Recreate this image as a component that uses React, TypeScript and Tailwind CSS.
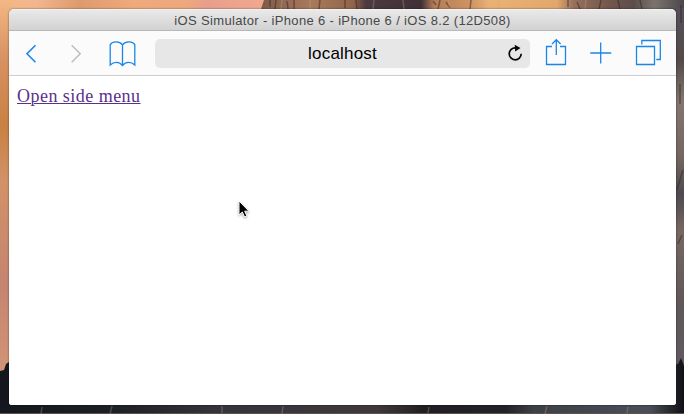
function Wallpaper() {
  return (
    <svg className="absolute inset-0" width="684" height="414" viewBox="0 0 684 414" preserveAspectRatio="none">
      <defs>
        <linearGradient id="sky" x1="0" x2="1" y1="0" y2="0">
          <stop offset="0" stopColor="#f3b883" />
          <stop offset=".14" stopColor="#f2b68e" />
          <stop offset=".3" stopColor="#dd9a6d" />
          <stop offset=".5" stopColor="#eeaa7b" />
          <stop offset=".7" stopColor="#eda97d" />
          <stop offset=".78" stopColor="#e79f8c" />
          <stop offset="1" stopColor="#f0a98f" />
        </linearGradient>
        <linearGradient id="rock" x1="0" x2="1" y1="0" y2="0">
          <stop offset="0" stopColor="#7d5a47" />
          <stop offset=".12" stopColor="#a97a5c" />
          <stop offset=".22" stopColor="#916449" />
          <stop offset=".25" stopColor="#4b3a3f" />
          <stop offset=".38" stopColor="#3f3037" />
          <stop offset=".41" stopColor="#b37d57" />
          <stop offset=".5" stopColor="#d09562" />
          <stop offset=".54" stopColor="#e9b274" />
          <stop offset=".7" stopColor="#e3a76c" />
          <stop offset=".74" stopColor="#96705c" />
          <stop offset=".82" stopColor="#75574c" />
          <stop offset=".88" stopColor="#5c4d4b" />
          <stop offset=".93" stopColor="#7b746d" />
          <stop offset="1" stopColor="#4b464c" />
        </linearGradient>
        <linearGradient id="left" x1="0" x2="0" y1="0" y2="1">
          <stop offset="0" stopColor="#f3b883" />
          <stop offset=".15" stopColor="#d89263" />
          <stop offset=".33" stopColor="#c98142" />
          <stop offset=".48" stopColor="#d19268" />
          <stop offset=".75" stopColor="#c58470" />
          <stop offset="1" stopColor="#d39676" />
        </linearGradient>
        <linearGradient id="right" x1="0" x2="0" y1="0" y2="1">
          <stop offset="0" stopColor="#55505a" />
          <stop offset=".14" stopColor="#544a48" />
          <stop offset=".25" stopColor="#82766e" />
          <stop offset=".4" stopColor="#74675f" />
          <stop offset=".5" stopColor="#4c4a50" />
          <stop offset=".6" stopColor="#766861" />
          <stop offset=".8" stopColor="#60575a" />
          <stop offset="1" stopColor="#605a60" />
        </linearGradient>
        <linearGradient id="base" x1="0" x2="1" y1="0" y2="0">
          <stop offset="0" stopColor="#15171e" />
          <stop offset=".16" stopColor="#1d1f26" />
          <stop offset=".32" stopColor="#35343a" />
          <stop offset=".55" stopColor="#3f393c" />
          <stop offset=".62" stopColor="#211e22" />
          <stop offset=".74" stopColor="#232327" />
          <stop offset=".78" stopColor="#3e4047" />
          <stop offset=".95" stopColor="#4b4e58" />
          <stop offset="1" stopColor="#101116" />
        </linearGradient>
      </defs>
      <rect width="265" height="12" fill="url(#sky)" />
      <path d="M264 0h420v12H260z" fill="url(#rock)" />
      <rect width="12" height="380" fill="url(#left)" />
      <rect x="672" y="8" width="12" height="372" fill="url(#right)" />
      <path d="M0 371l4-1 2-6 3-2v36h665v-33l4-1 3-6 3 8v47H0z" fill="url(#base)" />
      <path
        d="M270 0v7M276 0l-1 9M287 1l1 8M294 0v9M320 0l-1 9M345 0v8M356 0l1 9M433 1l3 4M440 0l-2 9M446 2l4 6M471 0l-1 9M568 0v7M577 2l3 7M601 0l-2 9M618 0l2 9M640 0l2 9M681 5v18M677 190l6-20M680 84v20M678 244l4-9"
        stroke="#33262a"
        strokeWidth="1.5"
        opacity=".5"
      />
      <path
        d="M282 0l-1 9M310 0v9M374 0l-1 9M403 0l1 9M449 0v9M482 0l1 9M499 0l-1 9M553 2l1 7M586 0l-1 9M42 407l-1 7M112 406l-2 8M222 406v7M283 406l-1 8M429 407l-1 6M547 406l-2 8M628 407l-1 6"
        stroke="#c6a389"
        strokeWidth="1.5"
        opacity=".3"
      />
    </svg>
  );
}

function Toolbar() {
  return (
    <div className="relative h-[45px] shrink-0 border-b border-[#cfcfcf] bg-[#fbfbfb]">
      <div className="flex h-full items-center pl-[146px]">
        <div className="mt-px flex h-[29px] w-[375px] items-center justify-center rounded-[5px] bg-[#e7e7e7] text-[17px] tracking-[0.2px] text-black">
          localhost
        </div>
      </div>
      <svg className="absolute left-0 top-0" width="667" height="44" viewBox="9 31 667 44" fill="none" stroke="#1b86e8" strokeWidth="1.3">
        <path d="M35.500 45.300L27 53.800l8.500 8.500" strokeWidth="1.6" />
        <path d="M71.700 45.300l8.500 8.500-8.500 8.500" stroke="#bdbdbd" strokeWidth="1.5" />
        <path d="M122.500 44.800C119.500 41 112.500 41 110.200 44.700V65C114 61.500 119.500 61.500 122.500 65.500C125.500 61.500 131 61.500 134.800 65V44.700C132.500 41 125.500 41 122.500 44.800V65.500" />
        <path d="M552 46.500h-5.500v18h19v-18H560M556.300 55V40M552 44l4.300-4.300 4.300 4.300" />
        <path d="M600.700 42.500v21M590.200 53h21" />
        <path d="M636.500 46.500h18v18h-18zM641.800 44.500v-4h18.500v19h-4" />
        <path d="M515.500 47.800a6 6 0 1 0 5.700 6" stroke="#080808" strokeWidth="1.7" />
        <path d="M514.700 44.800l5.800 3.300-5.300 3.300z" fill="#080808" stroke="none" />
      </svg>
    </div>
  );
}

export default function App() {
  return (
    <div className="relative h-[414px] w-[684px] overflow-hidden bg-[#5b5350] font-['Liberation_Sans',Arial,sans-serif]">
      <Wallpaper />
      <div className="absolute left-[9px] top-[9px] flex h-[396px] w-[667px] flex-col overflow-hidden rounded-t-[5px] rounded-b-[3px] bg-white shadow-[0_0_2px_rgba(0,0,0,0.6)]">
        <div className="flex h-[22px] shrink-0 items-center justify-center border-b border-t border-b-[#b8b8b8] border-t-[#f1f1f1] bg-linear-to-b from-[#e9e9e9] to-[#d2d2d2] pt-px text-[13px] tracking-[0.34px] whitespace-nowrap text-[#484848]">
          iOS Simulator - iPhone 6 - iPhone 6 / iOS 8.2 (12D508)
        </div>
        <Toolbar />
        <main className="flex-1 bg-white pl-2 pt-2">
          <a href="#" className="font-['Liberation_Serif',serif] text-[18px] leading-[25px] tracking-[0.47px] text-[#59308a] underline decoration-1 underline-offset-1">
            Open side menu
          </a>
        </main>
      </div>
      <svg className="absolute left-[236px] top-[199px] drop-shadow-[0_1px_1px_rgba(0,0,0,0.35)]" width="15" height="22" viewBox="0 0 15 22">
        <path d="M3 2v14l3.300-3 2.300 5 2.300-1-2.200-4.800H13z" fill="#000" stroke="#fff" strokeWidth="1" />
      </svg>
    </div>
  );
}
